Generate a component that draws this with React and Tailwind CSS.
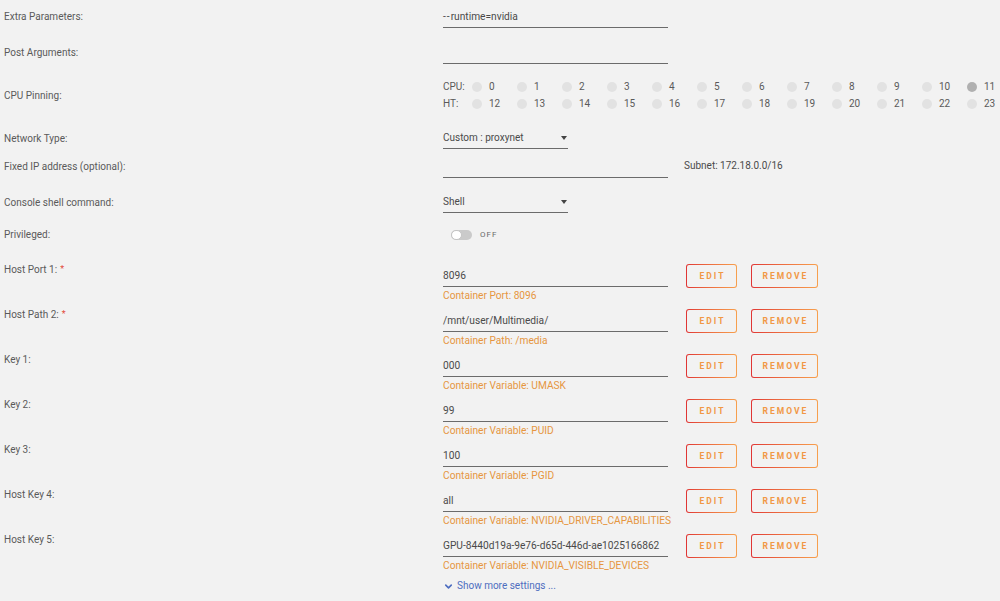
import React from "react";
import { ChevronDown } from "lucide-react";

const font = "[font-family:Roboto,'Liberation_Sans',Arial,sans-serif]";

function Label({ children, required, pt = "pt-[9px]" }) {
  return (
    <div className={`w-[443px] shrink-0 pl-[4px] ${pt} leading-[16px] text-[#5a5a5a]`}>
      {children}
      {required && <span className="relative -top-[1px] ml-[3px] text-[9px] text-[#e24a3a]">*</span>}
    </div>
  );
}

function TextInput({ value, w = "w-[225px]" }) {
  return (
    <div className={`${w} h-[19px] whitespace-nowrap border-b border-[#6b6b6b] text-[10.2px] leading-[16px] text-[#4a4a4a]`}>
      {value}
    </div>
  );
}

function Select({ value }) {
  return (
    <div className="flex w-[125px] h-[19px] justify-between border-b border-[#6b6b6b] leading-[16px] text-[#4a4a4a]">
      <span>{value}</span>
      <svg width="6" height="16" viewBox="0 0 6 16" className="mr-[1px]">
        <path d="M0 6 L6 6 L3 10 Z" fill="#444" />
      </svg>
    </div>
  );
}

function Btn({ w, children }) {
  return (
    <div className={`${w} h-[24px] rounded-[3px] bg-gradient-to-r from-[#e03535] to-[#f7a04e] p-[1px]`}>
      <div className="flex h-full w-full items-center justify-center rounded-[2px] bg-[#f2f2f2] pl-[2px] text-[8.5px] font-bold tracking-[2px] text-[#f19845]">
        {children}
      </div>
    </div>
  );
}

function HostRow({ label, required, value, sub }) {
  return (
    <div className="flex h-[45px]">
      <Label required={required}>{label}</Label>
      <div className="w-[225px] pt-[15px]">
        <TextInput value={value} />
        <div className="mt-[1px] whitespace-nowrap text-[10.2px] leading-[15px] text-[#e6963f]">{sub}</div>
      </div>
      <div className="flex gap-[14px] pl-[18px] pt-[11px]">
        <Btn w="w-[51px]">EDIT</Btn>
        <Btn w="w-[67px]">REMOVE</Btn>
      </div>
    </div>
  );
}

function CpuLine({ label, start, checked = [] }) {
  const nums = Array.from({ length: 12 }, (_, i) => start + i);
  return (
    <div className="flex h-[14px] items-center leading-[14px] text-[#5a5a5a]">
      <span className="w-[29px]">{label}</span>
      {nums.map((n) => (
        <div key={n} className="flex w-[45px] items-center">
          <span
            className={`h-[10px] w-[10px] rounded-full ${
              checked.includes(n) ? "bg-[#b0b0b0]" : "bg-[#e2e2e2]"
            }`}
          />
          <span className="ml-[7px]">{n}</span>
        </div>
      ))}
    </div>
  );
}

export default function App() {
  const hosts = [
    { label: "Host Port 1:", required: true, value: "8096", sub: "Container Port: 8096" },
    { label: "Host Path 2:", required: true, value: "/mnt/user/Multimedia/", sub: "Container Path: /media" },
    { label: "Key 1:", value: "000", sub: "Container Variable: UMASK" },
    { label: "Key 2:", value: "99", sub: "Container Variable: PUID" },
    { label: "Key 3:", value: "100", sub: "Container Variable: PGID" },
    { label: "Host Key 4:", value: "all", sub: "Container Variable: NVIDIA_DRIVER_CAPABILITIES" },
    {
      label: "Host Key 5:",
      value: "GPU-8440d19a-9e76-d65d-446d-ae1025166862",
      sub: "Container Variable: NVIDIA_VISIBLE_DEVICES",
    },
  ];

  return (
    <div className={`h-[601px] w-[1000px] overflow-hidden bg-[#f2f2f2] text-[10px] ${font}`}>
      <div className="flex h-[36px]">
        <Label>Extra Parameters:</Label>
        <div className="pt-[9px]">
          <TextInput
            value={
              <>
                <span className="tracking-[1px]">--</span>runtime=nvidia
              </>
            }
          />
        </div>
      </div>

      <div className="flex h-[36px]">
        <Label>Post Arguments:</Label>
        <div className="pt-[9px]">
          <TextInput value="" />
        </div>
      </div>

      <div className="flex h-[50px]">
        <Label pt="pt-[16px]">CPU Pinning:</Label>
        <div className="flex flex-col gap-[3px] pt-[8px]">
          <CpuLine label="CPU:" start={0} checked={[11]} />
          <CpuLine label="HT:" start={12} />
        </div>
      </div>

      <div className="flex h-[28px]">
        <Label>Network Type:</Label>
        <div className="pt-[8px]">
          <Select value="Custom : proxynet" />
        </div>
      </div>

      <div className="flex h-[36px]">
        <Label>Fixed IP address (optional):</Label>
        <div className="pt-[9px]">
          <TextInput value="" />
        </div>
        <div className="pl-[16px] pt-[8px] leading-[16px] text-[#4a4a4a]">Subnet: 172.18.0.0/16</div>
      </div>

      <div className="flex h-[32px]">
        <Label>Console shell command:</Label>
        <div className="pt-[8px]">
          <Select value="Shell" />
        </div>
      </div>

      <div className="flex h-[35px]">
        <Label>Privileged:</Label>
        <div className="flex h-[22px] items-center gap-[8px] pl-[8px] pt-[12px]">
          <div className="relative h-[10px] w-[21px] rounded-full bg-[#cacaca]">
            <span className="absolute left-0 top-0 h-[10px] w-[11px] rounded-full border border-[#c4c4c4] bg-white" />
          </div>
          <span className="text-[8px] tracking-[1px] text-[#6a6a6a]">OFF</span>
        </div>
      </div>

      {hosts.map((h) => (
        <HostRow key={h.label} {...h} />
      ))}

      <div className="flex">
        <div className="w-[443px] shrink-0" />
        <div className="flex items-center gap-[3px] pt-[10px] leading-[16px] text-[#4e6ec0]">
          <ChevronDown size={11} strokeWidth={3.5} />
          <span>Show more settings ...</span>
        </div>
      </div>
    </div>
  );
}
